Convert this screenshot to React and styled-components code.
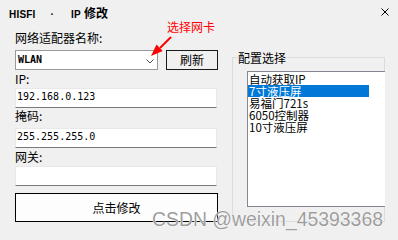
import React from 'react';
import styled, { createGlobalStyle } from 'styled-components';

const GlobalStyle = createGlobalStyle`
  html, body { margin: 0; padding: 0; background: #f0f0f0; }
  body { width: 398px; height: 240px; overflow: hidden; }
  * { box-sizing: border-box; }
`;

const Window = styled.div`
  position: relative;
  width: 398px;
  height: 240px;
  background: #f0f0f0;
  overflow: hidden;
  font-family: "Noto Sans CJK SC", "Noto Sans", sans-serif;
  font-size: 12px;
  color: #000;
`;

const TitleBar = styled.div`
  height: 31px;
  display: flex;
  align-items: baseline;
  padding: 7px 9px 0 9px;
`;

const TitleLatin = styled.span`
  font-family: "Liberation Sans", "Noto Sans CJK SC", sans-serif;
  font-weight: 700;
  font-size: 10px;
  line-height: 11px;
  letter-spacing: 0.2px;
  margin-left: ${p => p.$gap || 0}px;
`;

const TitleCjk = styled.span`
  font-family: "Noto Sans CJK SC", sans-serif;
  font-weight: 700;
  font-size: 12px;
  line-height: 11px;
  margin-left: ${p => p.$gap || 0}px;
`;

const CloseIcon = styled.svg`
  margin-left: auto;
  align-self: flex-start;
  margin-top: 1px;
  width: 8px;
  height: 8px;
`;

const Body = styled.div`
  display: flex;
  align-items: flex-start;
  padding-left: 15px;
  gap: 14px;
`;

const LeftColumn = styled.div`
  width: 203px;
  display: flex;
  flex-direction: column;
  align-items: flex-start;
`;

const Label = styled.div`
  line-height: 14px;
  height: 14px;
  margin-top: ${p => p.$top || 0}px;
  white-space: nowrap;
`;

const ComboRow = styled.div`
  display: flex;
  gap: 8px;
  margin-top: 5px;
`;

const Combo = styled.div`
  width: 143px;
  height: 20px;
  background: #fff;
  border: 1px solid #9a9a9a;
  display: flex;
  align-items: center;
  justify-content: space-between;
  padding: 0 3px 0 2px;
`;

const ComboText = styled.span`
  font-family: "DejaVu Sans Mono", monospace;
  font-weight: 700;
  font-size: 10px;
  line-height: 12px;
`;

const Chevron = styled.svg`
  width: 8px;
  height: 5px;
  margin-top: 2px;
`;

const RefreshButton = styled.button`
  width: 52px;
  height: 20px;
  padding: 0;
  border: 1px solid #1a1a1a;
  background: #f0f0f0;
  font-family: "Noto Sans CJK SC", sans-serif;
  font-size: 12px;
  line-height: 14px;
  color: #000;
`;

const Input = styled.div`
  width: 202px;
  height: 20px;
  margin-top: ${p => p.$top || 0}px;
  background: #fff;
  border: 1px solid #e8e8e8;
  border-bottom: 1px solid #7a7a7a;
  padding: 0 1px 2px 1px;
  display: flex;
  align-items: center;
  font-family: "DejaVu Sans Mono", monospace;
  font-size: 10px;
  line-height: 12px;
`;

const ActionButton = styled.button`
  width: 203px;
  height: 29px;
  margin-top: 7px;
  padding: 0;
  border: 1px solid #000;
  background: #fdfdfd;
  font-family: "Noto Sans CJK SC", sans-serif;
  font-size: 12px;
  line-height: 14px;
  color: #000;
`;

const GroupBox = styled.div`
  position: relative;
  margin-top: 26px;
  width: 153px;
  height: 165px;
  border: 1px solid #dcdcdc;
  padding: 13px 0 0 14px;
`;

const GroupTitle = styled.div`
  position: absolute;
  top: -7px;
  left: 4px;
  padding: 0 1px;
  background: #f0f0f0;
  line-height: 14px;
  white-space: nowrap;
`;

const ListBox = styled.div`
  width: 138px;
  height: 136px;
  background: #fff;
  border: 1px solid #828790;
  border-right: none;
  padding-top: 1px;
`;

const ListItem = styled.div`
  width: 121px;
  height: 12px;
  line-height: 12px;
  font-size: 11.5px;
  padding-left: 1px;
  white-space: nowrap;
  background: ${p => (p.$selected ? '#0078d7' : 'transparent')};
  color: ${p => (p.$selected ? '#fff' : '#000')};
`;

const Annotation = styled.div`
  position: absolute;
  left: 167px;
  top: 20px;
  color: #ff0000;
  font-size: 12px;
  line-height: 14px;
  white-space: nowrap;
`;

const Arrow = styled.svg`
  position: absolute;
  left: 148px;
  top: 34px;
  width: 26px;
  height: 26px;
`;

const Watermark = styled.div`
  position: absolute;
  left: 152px;
  top: 210px;
  font-family: "Liberation Sans", Arial, sans-serif;
  font-size: 19.4px;
  line-height: 19px;
  color: rgba(140, 140, 140, 0.85);
  text-shadow: 0 0 1px #fff, 0 0 1px #fff;
  white-space: nowrap;
`;

const items = ['自动获取IP', '7寸液压屏', '易福门721s', '6050控制器', '10寸液压屏'];

export default function App() {
  return (
    <Window>
      <GlobalStyle />
      <TitleBar>
        <TitleLatin>HISFI</TitleLatin>
        <TitleLatin $gap={15}>·</TitleLatin>
        <TitleLatin $gap={17}>IP</TitleLatin>
        <TitleCjk $gap={3}>修改</TitleCjk>
        <CloseIcon viewBox="0 0 8 8">
          <path d="M0.5 0.5 L7.5 7.5 M7.5 0.5 L0.5 7.5" stroke="#000" strokeWidth="1" fill="none" />
        </CloseIcon>
      </TitleBar>
      <Body>
        <LeftColumn>
          <Label>网络适配器名称:</Label>
          <ComboRow>
            <Combo>
              <ComboText>WLAN</ComboText>
              <Chevron viewBox="0 0 8 5">
                <polyline points="0.5,0.5 4,4 7.5,0.5" stroke="#555" strokeWidth="1" fill="none" />
              </Chevron>
            </Combo>
            <RefreshButton>刷新</RefreshButton>
          </ComboRow>
          <Label $top={2}>IP:</Label>
          <Input $top={2}>192.168.0.123</Input>
          <Label $top={1}>掩码:</Label>
          <Input $top={5}>255.255.255.0</Input>
          <Label $top={2}>网关:</Label>
          <Input $top={2}></Input>
          <ActionButton>点击修改</ActionButton>
        </LeftColumn>
        <GroupBox>
          <GroupTitle>配置选择</GroupTitle>
          <ListBox>
            {items.map((t, i) => (
              <ListItem key={t} $selected={i === 1}>{t}</ListItem>
            ))}
          </ListBox>
        </GroupBox>
      </Body>
      <Annotation>选择网卡</Annotation>
      <Arrow viewBox="0 0 26 26">
        <line x1="23" y1="3" x2="12" y2="14" stroke="#ff0000" strokeWidth="2" />
        <polygon points="3,22 8.5,10.5 14.7,17" fill="#ff0000" />
      </Arrow>
      <Watermark>CSDN @weixin_45393368</Watermark>
    </Window>
  );
}
